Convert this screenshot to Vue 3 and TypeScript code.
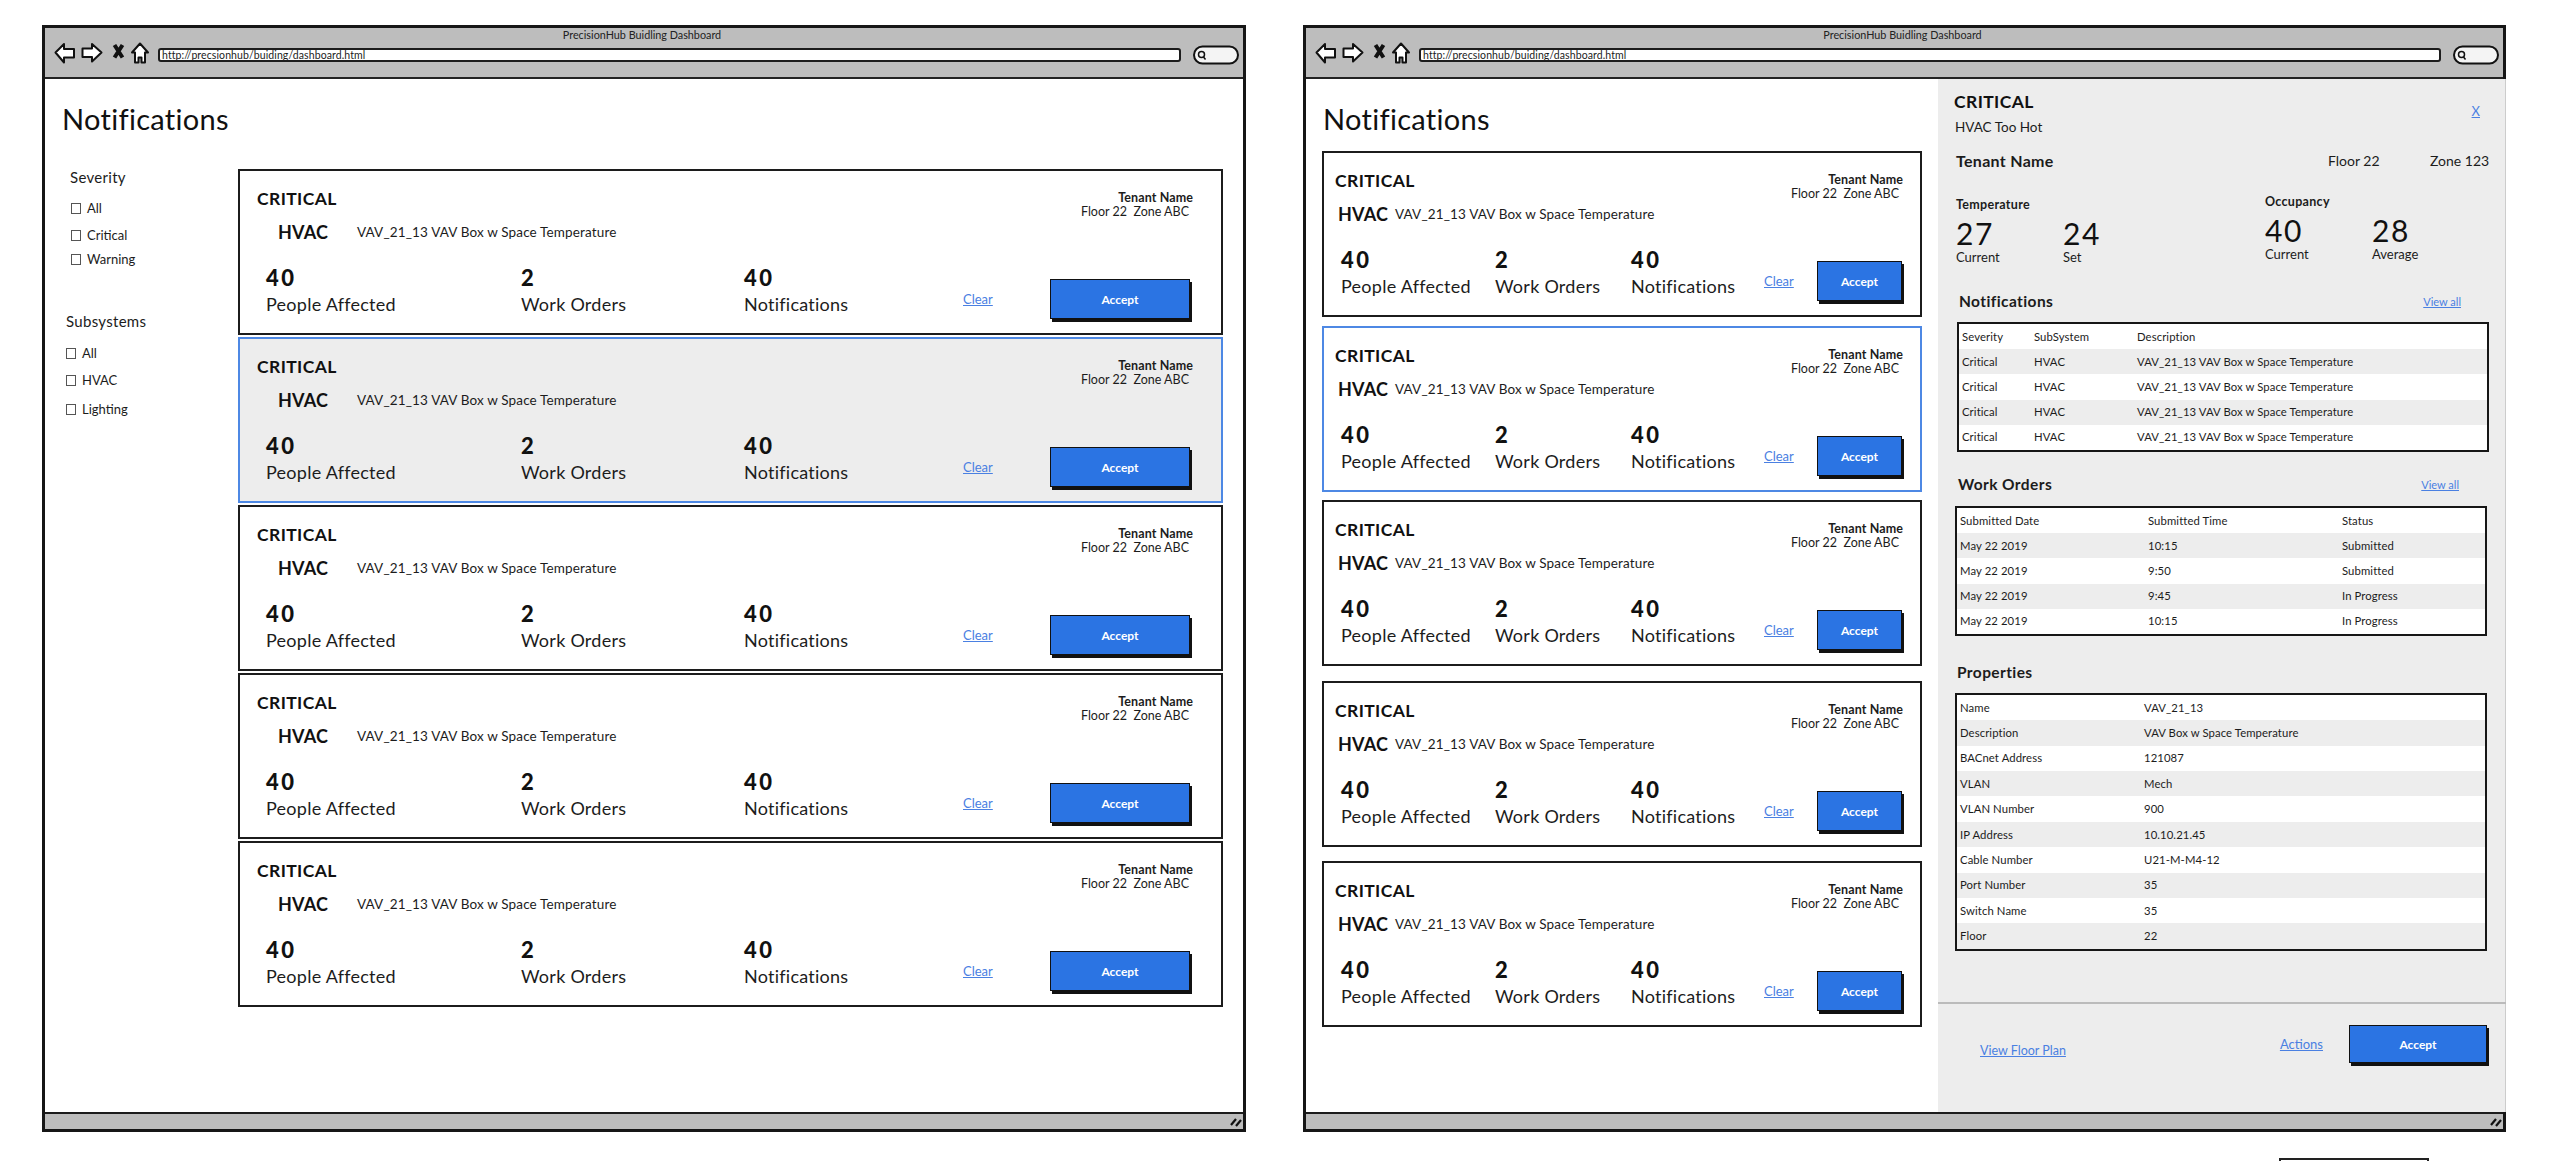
<script setup lang="ts">
interface Win {
  id: string
  filters: boolean
}

const windows: Win[] = [
  { id: 'list', filters: true },
  { id: 'detail', filters: false },
]

const cards = [1, 2, 3, 4, 5]
const severity = ['All', 'Critical', 'Warning']
const subsystems = ['All', 'HVAC', 'Lighting']
const desc = 'VAV_21_13 VAV Box w Space Temperature'

const notifRows = [
  ['Severity', 'SubSystem', 'Description'],
  ['Critical', 'HVAC', desc],
  ['Critical', 'HVAC', desc],
  ['Critical', 'HVAC', desc],
  ['Critical', 'HVAC', desc],
]

const workRows = [
  ['Submitted Date', 'Submitted Time', 'Status'],
  ['May 22 2019', '10:15', 'Submitted'],
  ['May 22 2019', '9:50', 'Submitted'],
  ['May 22 2019', '9:45', 'In Progress'],
  ['May 22 2019', '10:15', 'In Progress'],
]

const propRows = [
  ['Name', 'VAV_21_13'],
  ['Description', 'VAV Box w Space Temperature'],
  ['BACnet Address', '121087'],
  ['VLAN', 'Mech'],
  ['VLAN Number', '900'],
  ['IP Address', '10.10.21.45'],
  ['Cable Number', 'U21-M-M4-12'],
  ['Port Number', '35'],
  ['Switch Name', '35'],
  ['Floor', '22'],
]
</script>

<template>
  <div class="page">
    <div class="windows">
      <section v-for="win in windows" :key="win.id" class="window" :class="win.id">
        <header class="titlebar">
          <div class="title">PrecisionHub Buidling Dashboard</div>
          <div class="navrow">
            <svg class="nav-icons" width="100" height="26" viewBox="0 0 100 26">
              <path d="M1.500 10.500 10 2v5h10v8.500H10v5z" fill="#fff" stroke="#111" stroke-width="2" stroke-linejoin="round" />
              <path d="M28.500 6.500H38V2l9.500 8.500L38 19.500v-4.500h-9.500z" fill="#fff" stroke="#111" stroke-width="2" stroke-linejoin="round" />
              <path d="M60.500 3l8 12.500M68.500 3l-8 12.500" fill="none" stroke="#111" stroke-width="4" />
              <path d="M86 1.500l8 9h-3v10h-3.500v-5h-3v5H81v-10h-3z" fill="#fff" stroke="#111" stroke-width="2" stroke-linejoin="round" />
            </svg>
            <div class="url">http://precsionhub/buiding/dashboard.html</div>
            <svg class="search" width="46" height="20" viewBox="0 0 46 20">
              <rect x="1" y="1.500" width="44" height="17" rx="8.500" fill="#f4f4f4" stroke="#111" stroke-width="2" />
              <circle cx="8.500" cy="9.500" r="3" fill="none" stroke="#111" stroke-width="1.500" />
              <path d="M10.500 12l2 2.500" stroke="#111" stroke-width="1.500" />
            </svg>
          </div>
        </header>

        <div class="body">
          <div class="main">
            <h1 class="heading">Notifications</h1>
            <div class="content">
              <aside v-if="win.filters" class="filters">
                <h3 class="filter-title">Severity</h3>
                <ul class="checks">
                  <li v-for="s in severity" :key="s"><span class="box"></span>{{ s }}</li>
                </ul>
                <h3 class="filter-title second">Subsystems</h3>
                <ul class="checks second">
                  <li v-for="s in subsystems" :key="s"><span class="box"></span>{{ s }}</li>
                </ul>
              </aside>

              <div class="cards">
                <article v-for="c in cards" :key="c" class="card" :class="{ selected: c === 2 }">
                  <div class="card-top">
                    <div class="severity">CRITICAL</div>
                    <div class="tenant">
                      <div class="tenant-name">Tenant Name</div>
                      <div class="tenant-place">Floor 22&nbsp; Zone ABC</div>
                    </div>
                  </div>
                  <div class="card-system">
                    <span class="system">HVAC</span>
                    <span class="system-desc">{{ desc }}</span>
                  </div>
                  <div class="card-stats">
                    <div class="stat people"><b>40</b><span>People Affected</span></div>
                    <div class="stat orders"><b>2</b><span>Work Orders</span></div>
                    <div class="stat notifs"><b>40</b><span>Notifications</span></div>
                    <a class="link clear">Clear</a>
                    <button class="accept">Accept</button>
                  </div>
                </article>
              </div>
            </div>
          </div>

          <aside v-if="!win.filters" class="panel">
            <div class="panel-head">
              <div>
                <div class="severity">CRITICAL</div>
                <div class="panel-sub">HVAC Too Hot</div>
              </div>
              <a class="link close">X</a>
            </div>
            <div class="panel-tenant">
              <span class="tenant-title">Tenant Name</span>
              <span class="floor">Floor 22</span>
              <span>Zone 123</span>
            </div>
            <div class="readings">
              <div class="reading temp">
                <h4>Temperature</h4>
                <div class="reading-row">
                  <div><strong>27</strong><span>Current</span></div>
                  <div><strong>24</strong><span>Set</span></div>
                </div>
              </div>
              <div class="reading">
                <h4>Occupancy</h4>
                <div class="reading-row">
                  <div><strong>40</strong><span>Current</span></div>
                  <div><strong>28</strong><span>Average</span></div>
                </div>
              </div>
            </div>

            <div class="section-head sec-notif">
              <h3>Notifications</h3>
              <a class="link">View all</a>
            </div>
            <div class="table t-notif">
              <div v-for="(row, i) in notifRows" :key="i" class="row">
                <span v-for="cell in row" :key="cell">{{ cell }}</span>
              </div>
            </div>

            <div class="section-head sec-work">
              <h3>Work Orders</h3>
              <a class="link">View all</a>
            </div>
            <div class="table t-work">
              <div v-for="(row, i) in workRows" :key="i" class="row">
                <span v-for="cell in row" :key="cell">{{ cell }}</span>
              </div>
            </div>

            <div class="section-head sec-props">
              <h3>Properties</h3>
            </div>
            <div class="table t-props">
              <div v-for="row in propRows" :key="row[0]" class="row">
                <span v-for="cell in row" :key="cell">{{ cell }}</span>
              </div>
            </div>

            <div class="panel-foot">
              <a class="link plan">View Floor Plan</a>
              <a class="link actions">Actions</a>
              <button class="accept">Accept</button>
            </div>
          </aside>
        </div>

        <footer class="statusbar">
          <svg width="12" height="10" viewBox="0 0 12 10">
            <path d="M1 8l5-6M6 9l5-6" fill="none" stroke="#111" stroke-width="2.200" />
          </svg>
        </footer>
      </section>
    </div>
    <div class="stray"></div>
  </div>
</template>

<style>
html,
body {
  margin: 0;
  overflow: hidden;
  background: #fff;
}
</style>

<style scoped>
.page {
  height: 1161px;
  overflow: hidden;
  padding-top: 25px;
  box-sizing: border-box;
  font-family: Lato, "Noto Sans", sans-serif;
  color: #1c1c1c;
}

.windows {
  display: flex;
  gap: 57px;
  padding-left: 42px;
}

.window {
  width: 1204px;
  height: 1107px;
  box-sizing: border-box;
  border: 3px solid #161616;
  display: flex;
  flex-direction: column;
  background: #fff;
}

.window.detail {
  width: 1203px;
}

.titlebar {
  height: 51px;
  box-sizing: border-box;
  background: #bdbdbd;
  border-bottom: 2px solid #222;
  flex: none;
}

.title {
  height: 14px;
  line-height: 14px;
  font-size: 10.800px;
  text-align: center;
  color: #222;
  padding-right: 4px;
}

.navrow {
  display: flex;
  align-items: center;
  height: 26px;
  padding: 0 4px 0 9px;
}

.nav-icons {
  flex: none;
}

.url {
  flex: 1;
  height: 14px;
  box-sizing: border-box;
  margin-left: 4px;
  border: 2px solid #1c1c1c;
  border-radius: 3px;
  background: #fff;
  font-size: 10.500px;
  line-height: 11px;
  padding-left: 2px;
  letter-spacing: 0.100px;
}

.search {
  flex: none;
  margin-left: 12px;
}

.body {
  flex: 1;
  min-height: 0;
  display: flex;
}

.main {
  flex: 1;
  min-width: 0;
  padding: 23px 0 0 17px;
}

.window.detail .main {
  flex: none;
  width: 632px;
  box-sizing: border-box;
  padding-left: 16px;
}

.heading {
  margin: 0 0 33px;
  font-size: 29px;
  line-height: 34px;
  font-weight: 400;
  color: #111;
  letter-spacing: 0.300px;
}

.window.detail .heading {
  margin-bottom: 15px;
  padding-left: 1px;
}

.content {
  display: flex;
}

.filters {
  width: 176px;
  flex: none;
  margin-top: -1px;
}

.filter-title {
  margin: 0 0 0 8px;
  font-size: 15px;
  line-height: 18px;
  font-weight: 400;
  letter-spacing: 0.300px;
}

.filter-title.second {
  margin: 45px 0 0 4px;
}

.checks {
  list-style: none;
  margin: 14px 0 0 9px;
  padding: 0;
  font-size: 13px;
}

.checks.second {
  margin: 15px 0 0 4px;
}

.checks li {
  display: flex;
  align-items: center;
  height: 16px;
  line-height: 16px;
  margin-bottom: 8px;
}

.checks li:first-child {
  margin-bottom: 11px;
}

.checks.second li:nth-child(2) {
  margin-bottom: 13px;
}

.box {
  width: 8px;
  height: 9px;
  border: 1px solid #555;
  background: #fff;
  margin-right: 6px;
  flex: none;
}

.cards {
  display: flex;
  flex-direction: column;
  gap: 2px;
  width: 985px;
}

.window.detail .cards {
  width: 600px;
  gap: 0;
}

.window.detail .card:nth-child(2) {
  margin-top: 9px;
}

.window.detail .card:nth-child(3) {
  margin-top: 8px;
}

.window.detail .card:nth-child(4) {
  margin-top: 15px;
}

.window.detail .card:nth-child(5) {
  margin-top: 14px;
}

.card {
  height: 166px;
  box-sizing: border-box;
  border: 2px solid #1c1c1c;
  padding: 20px 28px 0 17px;
  background: #fff;
}

.window.detail .card {
  padding: 20px 17px 0 11px;
}

.card.selected {
  border-color: #4d88e4;
  background: #ededed;
}

.window.detail .card.selected {
  background: #fff;
}

.card-top {
  display: flex;
  justify-content: space-between;
  align-items: flex-start;
  height: 28px;
}

.severity {
  font-size: 17.500px;
  line-height: 16px;
  font-weight: 700;
  color: #111;
  letter-spacing: 0.400px;
}

.tenant {
  text-align: right;
  font-size: 12.500px;
  line-height: 14px;
}

.tenant-name {
  font-weight: 700;
  letter-spacing: 0.100px;
}

.tenant-place {
  padding-right: 4px;
}

.card-system {
  display: flex;
  align-items: center;
  height: 20px;
  margin-top: 3px;
  padding-left: 21px;
}

.window.detail .card-system {
  padding-left: 3px;
}

.system {
  width: 79px;
  font-size: 18px;
  font-weight: 700;
  color: #111;
  letter-spacing: 0.200px;
}

.window.detail .system {
  width: 57px;
}

.system-desc {
  font-size: 13.500px;
  letter-spacing: 0.150px;
}

.card-stats {
  display: flex;
  align-items: flex-start;
  margin-top: 23px;
  padding-left: 9px;
}

.window.detail .card-stats {
  padding-left: 6px;
}

.stat {
  display: flex;
  flex-direction: column;
}

.stat b {
  margin-top: 1px;
  font-size: 22px;
  line-height: 24px;
  font-weight: 900;
  color: #111;
  letter-spacing: 2.500px;
}

.stat span {
  margin-top: 3px;
  font-size: 18px;
  line-height: 22px;
  white-space: nowrap;
  letter-spacing: 0.250px;
}

.people {
  width: 255px;
}

.orders {
  width: 223px;
}

.notifs {
  width: 219px;
}

.window.detail .people {
  width: 154px;
}

.window.detail .orders {
  width: 136px;
}

.window.detail .notifs {
  width: 133px;
}

.link {
  color: #4a80e2;
  text-decoration: underline;
  font-size: 13px;
  line-height: 16px;
}

.clear {
  width: 87px;
  margin-top: 26px;
}

.window.detail .clear {
  width: 53px;
}

.accept {
  border: 1px solid #111;
  box-shadow: 2px 3px 0 #111;
  background: #2b74e3;
  color: #fff;
  font-family: inherit;
  font-size: 12px;
  font-weight: 700;
  padding: 0;
  cursor: pointer;
}

.card .accept {
  width: 140px;
  height: 40px;
  margin-top: 14px;
}

.window.detail .card .accept {
  width: 85px;
}

.panel {
  width: 570px;
  box-sizing: border-box;
  margin-right: -3px;
  background: #ededed;
  border-right: 1px solid #ccc;
  display: flex;
  flex-direction: column;
  padding-top: 15px;
}

.panel-head {
  display: flex;
  justify-content: space-between;
  align-items: center;
  padding: 0 25px 0 16px;
}

.panel-sub {
  margin-top: 8px;
  margin-left: 1px;
  font-size: 13.500px;
  line-height: 18px;
}

.close {
  margin-top: -8px;
}

.panel-tenant {
  display: flex;
  align-items: center;
  height: 20px;
  margin-top: 15px;
  padding-left: 18px;
  font-size: 14px;
  line-height: 20px;
}

.tenant-title {
  font-size: 16px;
  font-weight: 700;
  letter-spacing: 0.300px;
  width: 372px;
}

.floor {
  width: 102px;
}

.readings {
  display: flex;
  margin-top: 23px;
  padding-left: 18px;
}

.reading {
  flex: 1;
}

.reading.temp {
  flex: none;
  width: 309px;
  padding-top: 3px;
}

.reading h4 {
  margin: 0 0 4px;
  font-size: 12.500px;
  line-height: 16px;
  font-weight: 700;
  letter-spacing: 0.300px;
}

.reading-row {
  display: flex;
}

.reading-row div {
  width: 107px;
}

.reading-row strong {
  display: block;
  font-size: 30px;
  line-height: 32px;
  font-weight: 400;
  color: #111;
  letter-spacing: 1.500px;
}

.reading-row span {
  display: block;
  font-size: 13px;
  line-height: 16px;
}

.section-head {
  display: flex;
  justify-content: space-between;
  align-items: center;
  height: 20px;
}

.section-head h3 {
  margin: 0;
  font-size: 15.500px;
  font-weight: 700;
  letter-spacing: 0.400px;
}

.section-head .link {
  font-size: 11px;
  margin-top: 2px;
}

.sec-notif {
  margin-top: 26px;
  padding: 0 44px 0 21px;
}

.sec-work {
  margin-top: 22px;
  padding: 0 46px 0 20px;
}

.sec-props {
  margin-top: 26px;
  padding-left: 19px;
}

.table {
  box-sizing: border-box;
  width: 532px;
  border: 2px solid #161616;
  background: #fff;
  font-size: 11.300px;
}

.t-notif {
  margin: 11px 0 0 19px;
}

.t-work {
  margin: 12px 0 0 17px;
}

.t-props {
  margin: 11px 0 0 17px;
}

.row {
  display: grid;
  height: 25.200px;
  align-items: center;
  padding-left: 3px;
  line-height: 14px;
  letter-spacing: 0.100px;
}

.t-props .row {
  height: 25.400px;
}

.row:nth-child(even) {
  background: #ededed;
}

.t-notif .row {
  grid-template-columns: 72px 103px 1fr;
}

.t-work .row {
  grid-template-columns: 188px 194px 1fr;
}

.t-props .row {
  grid-template-columns: 184px 1fr;
}

.panel-foot {
  margin-top: auto;
  height: 110px;
  box-sizing: border-box;
  border-top: 2px solid #bbb;
  margin-right: -1px;
  display: flex;
  align-items: flex-start;
  padding: 21px 19px 0 42px;
}

.plan {
  margin-top: 17px;
  margin-right: auto;
  font-size: 12.500px;
  line-height: 18px;
}

.actions {
  margin-top: 11px;
  margin-right: 26px;
  font-size: 13px;
}

.panel-foot .accept {
  width: 138px;
  height: 38px;
}

.statusbar {
  height: 17px;
  box-sizing: border-box;
  flex: none;
  background: #bdbdbd;
  border-top: 2px solid #1c1c1c;
  display: flex;
  justify-content: flex-end;
  align-items: center;
  padding-right: 1px;
  position: relative;
  z-index: 1;
}

.stray {
  box-sizing: border-box;
  width: 150px;
  height: 20px;
  margin: 26px 0 0 2279px;
  border: 2px solid #222;
}
</style>
